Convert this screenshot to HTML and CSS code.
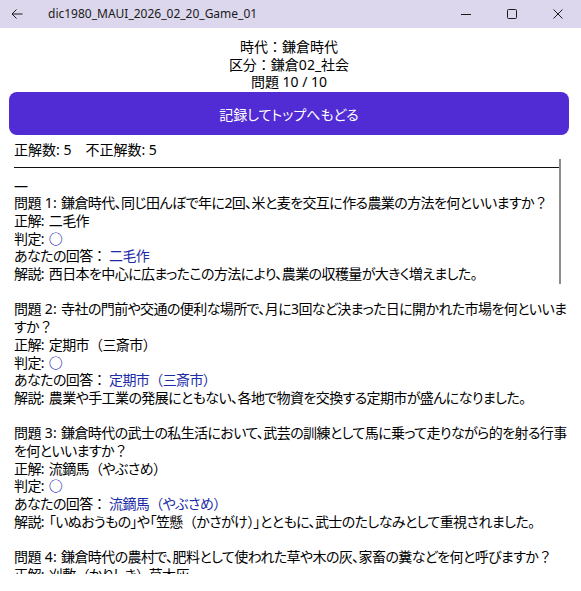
FILE: index.html
```html
<!DOCTYPE html>
<html lang="ja">
<head>
<meta charset="utf-8">
<title>dic1980_MAUI_2026_02_20_Game_01</title>
<link rel="stylesheet" href="styles.css">
</head>
<body>
<div class="window">
  <header class="titlebar">
    <span class="back">
      <svg width="12" height="10" viewBox="0 0 12 10"><path d="M11.5 5H1M5.5 0.5L1 5l4.5 4.5" fill="none" stroke="#1b1b1b" stroke-width="1"/></svg>
    </span>
    <span class="title">dic1980_MAUI_2026_02_20_Game_01</span>
    <div class="controls">
      <span class="ctl"><svg width="10" height="10" viewBox="0 0 10 10"><path d="M0 5.5h10" stroke="#1b1b1b" stroke-width="1"/></svg></span>
      <span class="ctl"><svg width="10" height="10" viewBox="0 0 10 10"><rect x="0.5" y="0.5" width="9" height="9" rx="1" fill="none" stroke="#1b1b1b" stroke-width="1"/></svg></span>
      <span class="ctl"><svg width="10" height="10" viewBox="0 0 10 10"><path d="M0.5 0.5l9 9M9.5 0.5l-9 9" stroke="#1b1b1b" stroke-width="1"/></svg></span>
    </div>
  </header>
  <main class="page">
    <div class="info">
      <p>時代：鎌倉時代</p>
      <p>区分：鎌倉02_社会</p>
      <p>問題 10 / 10</p>
    </div>
    <button class="primary">記録してトップへもどる</button>
    <p class="score">正解数: 5　不正解数: 5</p>
    <div class="results">
      <div class="rule"><span></span></div>
      <p>—</p>
      <section class="q">
        <p>問題<span class="sp"> 1: </span>鎌倉時代、同じ田んぼで年に2回、米と麦を交互に作る農業の方法を何といいますか<span class="fw">？</span></p>
        <p>正解<span class="sp">: </span>二毛作</p>
        <p>判定<span class="sp">: </span><span class="blue mark">○</span></p>
        <p>あなたの回答<span class="fw">：</span> <span class="blue">二毛作</span></p>
        <p>解説<span class="sp">: </span>西日本を中心に広まったこの方法により、農業の収穫量が大きく増えました。</p>
      </section>
      <section class="q">
        <p>問題<span class="sp"> 2: </span>寺社の門前や交通の便利な場所で、月に3回など決まった日に開かれた市場を何といいますか<span class="fw">？</span></p>
        <p>正解<span class="sp">: </span>定期市<span class="fw">（</span>三斎市<span class="fw">）</span></p>
        <p>判定<span class="sp">: </span><span class="blue mark">○</span></p>
        <p>あなたの回答<span class="fw">：</span> <span class="blue">定期市<span class="fw">（</span>三斎市<span class="fw">）</span></span></p>
        <p>解説<span class="sp">: </span>農業や手工業の発展にともない、各地で物資を交換する定期市が盛んになりました。</p>
      </section>
      <section class="q">
        <p>問題<span class="sp"> 3: </span>鎌倉時代の武士の私生活において、武芸の訓練として馬に乗って走りながら的を射る行事を何といいますか<span class="fw">？</span></p>
        <p>正解<span class="sp">: </span>流鏑馬<span class="fw">（</span>やぶさめ<span class="fw">）</span></p>
        <p>判定<span class="sp">: </span><span class="blue mark">○</span></p>
        <p>あなたの回答<span class="fw">：</span> <span class="blue">流鏑馬<span class="fw">（</span>やぶさめ<span class="fw">）</span></span></p>
        <p>解説<span class="sp">: </span>「いぬおうもの」や「笠懸<span class="fw">（</span>かさがけ<span class="fw">）</span>」とともに、武士のたしなみとして重視されました。</p>
      </section>
      <section class="q">
        <p>問題<span class="sp"> 4: </span>鎌倉時代の農村で、肥料として使われた草や木の灰、家畜の糞などを何と呼びますか<span class="fw">？</span></p>
        <p>正解<span class="sp">: </span>刈敷<span class="fw">（</span>かりしき<span class="fw">）</span>、草木灰</p>
        <p>判定<span class="sp">: </span><span class="blue mark">○</span></p>
      </section>
      <div class="thumb"></div>
    </div>
  </main>
</div>
</body>
</html>
```
FILE: styles.css
```css
* { box-sizing: border-box; }
html, body { margin: 0; padding: 0; }
body {
  width: 581px;
  height: 591px;
  overflow: hidden;
  background: #ffffff;
  font-family: "Noto Sans", "Noto Sans CJK JP", sans-serif;
  font-size: 14px;
  line-height: 17.7px;
  color: #000000;
}
p { margin: 0; }
.window {
  display: flex;
  flex-direction: column;
  height: 591px;
}
.titlebar {
  height: 28px;
  background: #dcd7ec;
  display: flex;
  align-items: center;
  flex: none;
}
.back {
  width: 48px;
  padding-left: 11px;
  display: flex;
  align-items: center;
  height: 28px;
  padding-bottom: 1px;
}
.title {
  font-size: 12px;
  color: #1b1b1b;
  flex: 1;
  padding-bottom: 1px;
}
.controls { display: flex; }
.ctl {
  width: 46px;
  height: 28px;
  display: flex;
  align-items: center;
  justify-content: center;
  padding-bottom: 1px;
}
.page {
  padding: 10px 12px 0 9px;
  display: flex;
  flex-direction: column;
}
.info { text-align: center; }
.primary {
  margin-top: 1px;
  height: 43px;
  border: none;
  border-radius: 8px;
  background: #512bd4;
  color: #ffffff;
  font-family: "Noto Sans", "Noto Sans CJK JP", sans-serif;
  font-size: 14px;
  font-feature-settings: "palt";
  padding: 0;
}
.score {
  margin-top: 6px;
  padding-left: 5px;
}
.results {
  position: relative;
  height: 415px;
  overflow: hidden;
  padding: 0 1px 0 5px;
  font-feature-settings: "palt";
  letter-spacing: -0.6px;
}
.fw { font-feature-settings: normal; }
.sp { letter-spacing: 0.3px; }
.rule {
  height: 17.7px;
  display: flex;
  align-items: center;
  padding-right: 9px;
}
.rule span {
  display: block;
  width: 100%;
  height: 1px;
  background: #111111;
}
.q { margin-bottom: 17.7px; }
.blue { color: #1c2ca8; }
.mark { font-weight: 700; }
.thumb {
  position: absolute;
  left: 550px;
  top: -3px;
  width: 2px;
  height: 128px;
  background: #8c8c8c;
}
```
